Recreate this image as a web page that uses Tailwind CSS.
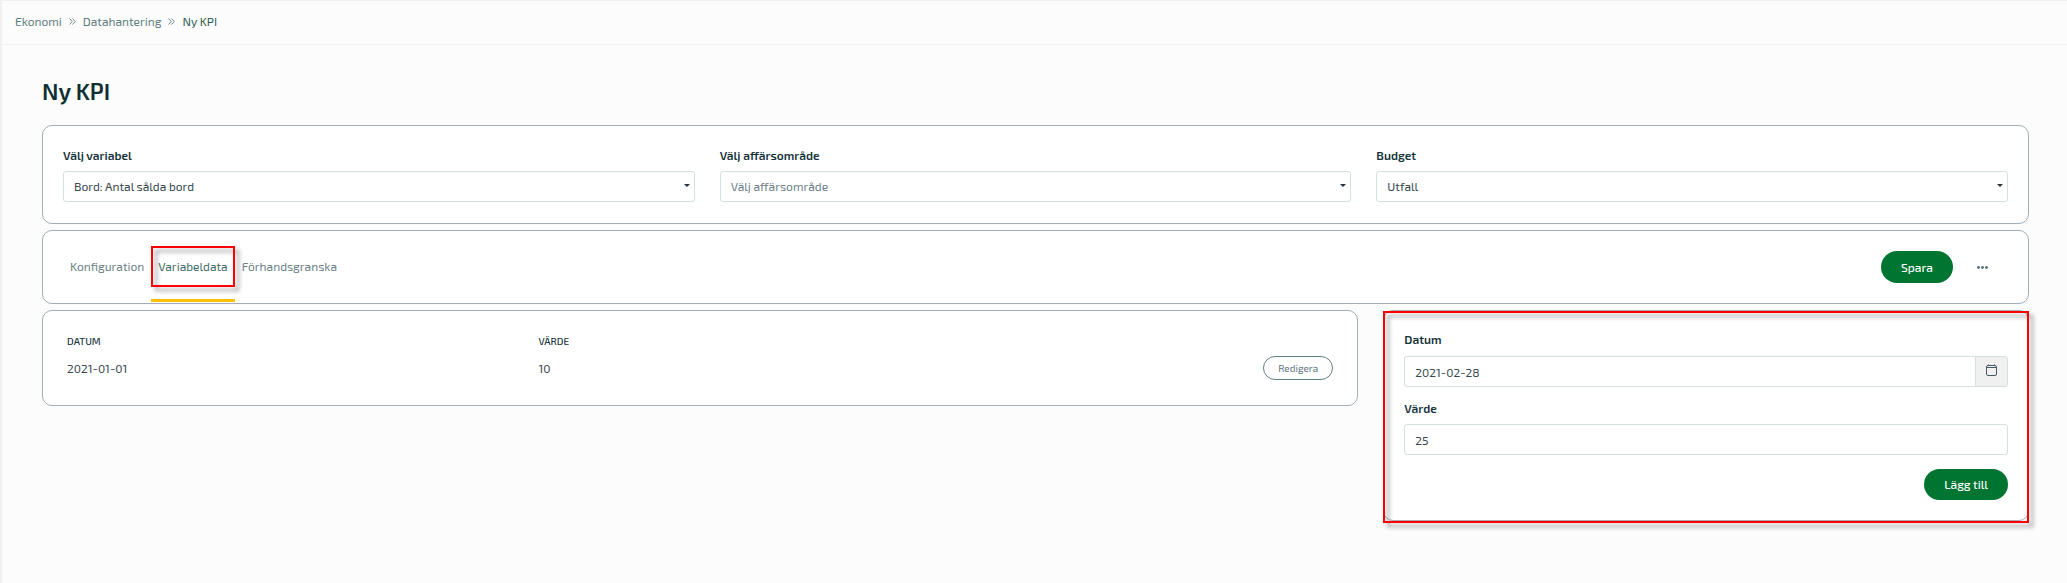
<!DOCTYPE html>
<html lang="sv">
<head>
    <meta charset="UTF-8">
    <meta name="viewport" content="width=device-width, initial-scale=1.0">
    <title>Ny KPI</title>
    <!-- Tailwind CSS CDN -->
    <script src="https://cdn.jsdelivr.net/npm/@tailwindcss/browser@4"></script>
    <style>
        body {
            font-family: 'Exo 2', Roboto, 'Liberation Sans', sans-serif;
        }
    </style>
</head>
<body class="min-h-screen flex flex-col bg-[#fcfcfc] text-[12px] leading-4 text-[#37474f]">
    <div class="grow border-t border-l-2 border-[#f1f1f1]">

        <!-- Breadcrumbs -->
        <nav class="flex h-11 items-center gap-[7px] border-b border-[#f1f1f1] pb-[3px] pl-[13px] text-[#607d80]" aria-label="Breadcrumb">
            <a href="#">Ekonomi</a>
            <svg class="size-[7px]" viewBox="0 0 7 7" fill="none" stroke="currentColor" stroke-width="0.9"><path d="M.5.5 3.2 3.5.5 6.5M3.5.5 6.2 3.5 3.5 6.5"/></svg>
            <a href="#">Datahantering</a>
            <svg class="size-[7px]" viewBox="0 0 7 7" fill="none" stroke="currentColor" stroke-width="0.9"><path d="M.5.5 3.2 3.5.5 6.5M3.5.5 6.2 3.5 3.5 6.5"/></svg>
            <span class="text-[#2f5f58]">Ny KPI</span>
        </nav>

        <main class="flex flex-col gap-[6px] pt-[30px] pr-[38px] pl-10">
            <h1 class="mb-3 text-[23px] leading-8 font-semibold text-[#0f2f33]">Ny KPI</h1>

            <!-- Variable selection -->
            <section class="grid grid-cols-3 gap-[25px] rounded-[10px] border border-[#a3adb5] bg-white px-5 py-[21px]">
                <div>
                    <label for="variable" class="mb-2 block font-semibold text-[#14323a]">Välj variabel</label>
                    <div class="relative">
                        <select id="variable" class="block h-[31px] w-full appearance-none rounded-[3px] border border-[#d5dee1] bg-white px-[10px] pb-px">
                            <option>Bord: Antal sålda bord</option>
                        </select>
                        <svg class="pointer-events-none absolute top-[13px] right-[5px] h-[3px] w-[6px]" viewBox="0 0 6 3" fill="#263238"><path d="M0 0h6L3 3z"/></svg>
                    </div>
                </div>
                <div>
                    <label for="area" class="mb-2 block font-semibold text-[#14323a]">Välj affärsområde</label>
                    <div class="relative">
                        <select id="area" class="block h-[31px] w-full appearance-none rounded-[3px] border border-[#d5dee1] bg-white px-[10px] pb-px text-[#6b7f86]">
                            <option>Välj affärsområde</option>
                        </select>
                        <svg class="pointer-events-none absolute top-[13px] right-[5px] h-[3px] w-[6px]" viewBox="0 0 6 3" fill="#263238"><path d="M0 0h6L3 3z"/></svg>
                    </div>
                </div>
                <div>
                    <label for="budget" class="mb-2 block font-semibold text-[#14323a]">Budget</label>
                    <div class="relative">
                        <select id="budget" class="block h-[31px] w-full appearance-none rounded-[3px] border border-[#d5dee1] bg-white px-[10px] pb-px">
                            <option>Utfall</option>
                        </select>
                        <svg class="pointer-events-none absolute top-[13px] right-[5px] h-[3px] w-[6px]" viewBox="0 0 6 3" fill="#263238"><path d="M0 0h6L3 3z"/></svg>
                    </div>
                </div>
            </section>

            <!-- Tabs -->
            <section class="flex h-[74px] items-stretch justify-between rounded-[10px] border border-[#a3adb5] bg-white pr-8 pl-5">
                <div class="flex pb-px text-[#6b7f86]" role="tablist">
                    <button type="button" role="tab" class="border-y-3 border-transparent px-[7px] pb-[2px]">Konfiguration</button>
                    <button type="button" role="tab" aria-selected="true" class="relative border-y-3 border-t-transparent border-b-[#ffc107] px-[7px] pb-[2px] text-[#3f6b66]">
                        Variabeldata
                        <span class="pointer-events-none absolute inset-x-0 top-3 h-[41px] border-2 border-[#ff0000] drop-shadow-[4px_4px_2px_rgba(0,0,0,0.4)]"></span>
                    </button>
                    <button type="button" role="tab" class="border-y-3 border-transparent px-[7px] pb-[2px]">Förhandsgranska</button>
                </div>
                <div class="flex items-center gap-4">
                    <button type="button" class="h-8 rounded-full bg-[#007532] px-5 font-medium text-white">Spara</button>
                    <button type="button" class="flex h-8 w-[27px] items-center justify-center" aria-label="Mer">
                        <svg class="h-[3px] w-[11px]" viewBox="0 0 11 3" fill="#546e7a"><circle cx="1.5" cy="1.5" r="1.4"/><circle cx="5.5" cy="1.5" r="1.4"/><circle cx="9.5" cy="1.5" r="1.4"/></svg>
                    </button>
                </div>
            </section>

            <div class="grid grid-cols-3 items-start gap-[25px]">
                <!-- Values -->
                <section class="col-span-2 rounded-[10px] border border-[#a3adb5] bg-white px-5 pt-[22px] pb-[18px]">
                    <table class="w-full text-left">
                        <thead>
                            <tr class="text-[10px] text-[#14323a] uppercase">
                                <th class="w-[37%] px-1 font-medium">Datum</th>
                                <th class="px-1 font-medium">Värde</th>
                                <th></th>
                            </tr>
                        </thead>
                        <tbody>
                            <tr>
                                <td class="px-1">2021-01-01</td>
                                <td class="px-1">10</td>
                                <td class="px-1 py-[7px] text-right">
                                    <button type="button" class="inline-block h-6 rounded-full border border-[#607d80] px-[14px] align-top text-[10px] leading-5 text-[#607580]">Redigera</button>
                                </td>
                            </tr>
                        </tbody>
                    </table>
                </section>

                <!-- New value -->
                <form class="relative flex flex-col rounded-[10px] border border-[#a3adb5] bg-white px-5 pt-5 pb-5">
                    <label for="date" class="mb-[9px] font-semibold text-[#14323a]">Datum</label>
                    <div class="flex h-[31px] overflow-hidden rounded-[3px] border border-[#d5dee1]">
                        <input id="date" type="text" value="2021-02-28" class="min-w-0 grow px-[10px]">
                        <button type="button" class="flex w-8 items-center justify-center border-l border-[#d5dee1] bg-[#f0f0f0] pb-[3px]" aria-label="Välj datum">
                            <svg class="h-3 w-[11px]" viewBox="0 0 11 12" fill="none" stroke="#455a64"><rect x=".5" y="1.5" width="10" height="10" rx="1.5"/><path d="M.5 3.5h10"/><path d="M2.5 0v1M8.5 0v1" stroke-opacity=".6"/></svg>
                        </button>
                    </div>
                    <label for="value" class="mt-[13px] mb-2 font-semibold text-[#14323a]">Värde</label>
                    <input id="value" type="text" value="25" class="h-[31px] rounded-[3px] border border-[#d5dee1] px-[10px]">
                    <button type="submit" class="mt-[14px] h-[31px] self-end rounded-full bg-[#007532] px-5 pb-px font-medium text-white">Lägg till</button>
                    <span class="pointer-events-none absolute -inset-x-px top-0 -bottom-[3px] border-2 border-[#ff0000] drop-shadow-[4px_4px_2px_rgba(0,0,0,0.4)]"></span>
                </form>
            </div>
        </main>
    </div>
</body>
</html>
